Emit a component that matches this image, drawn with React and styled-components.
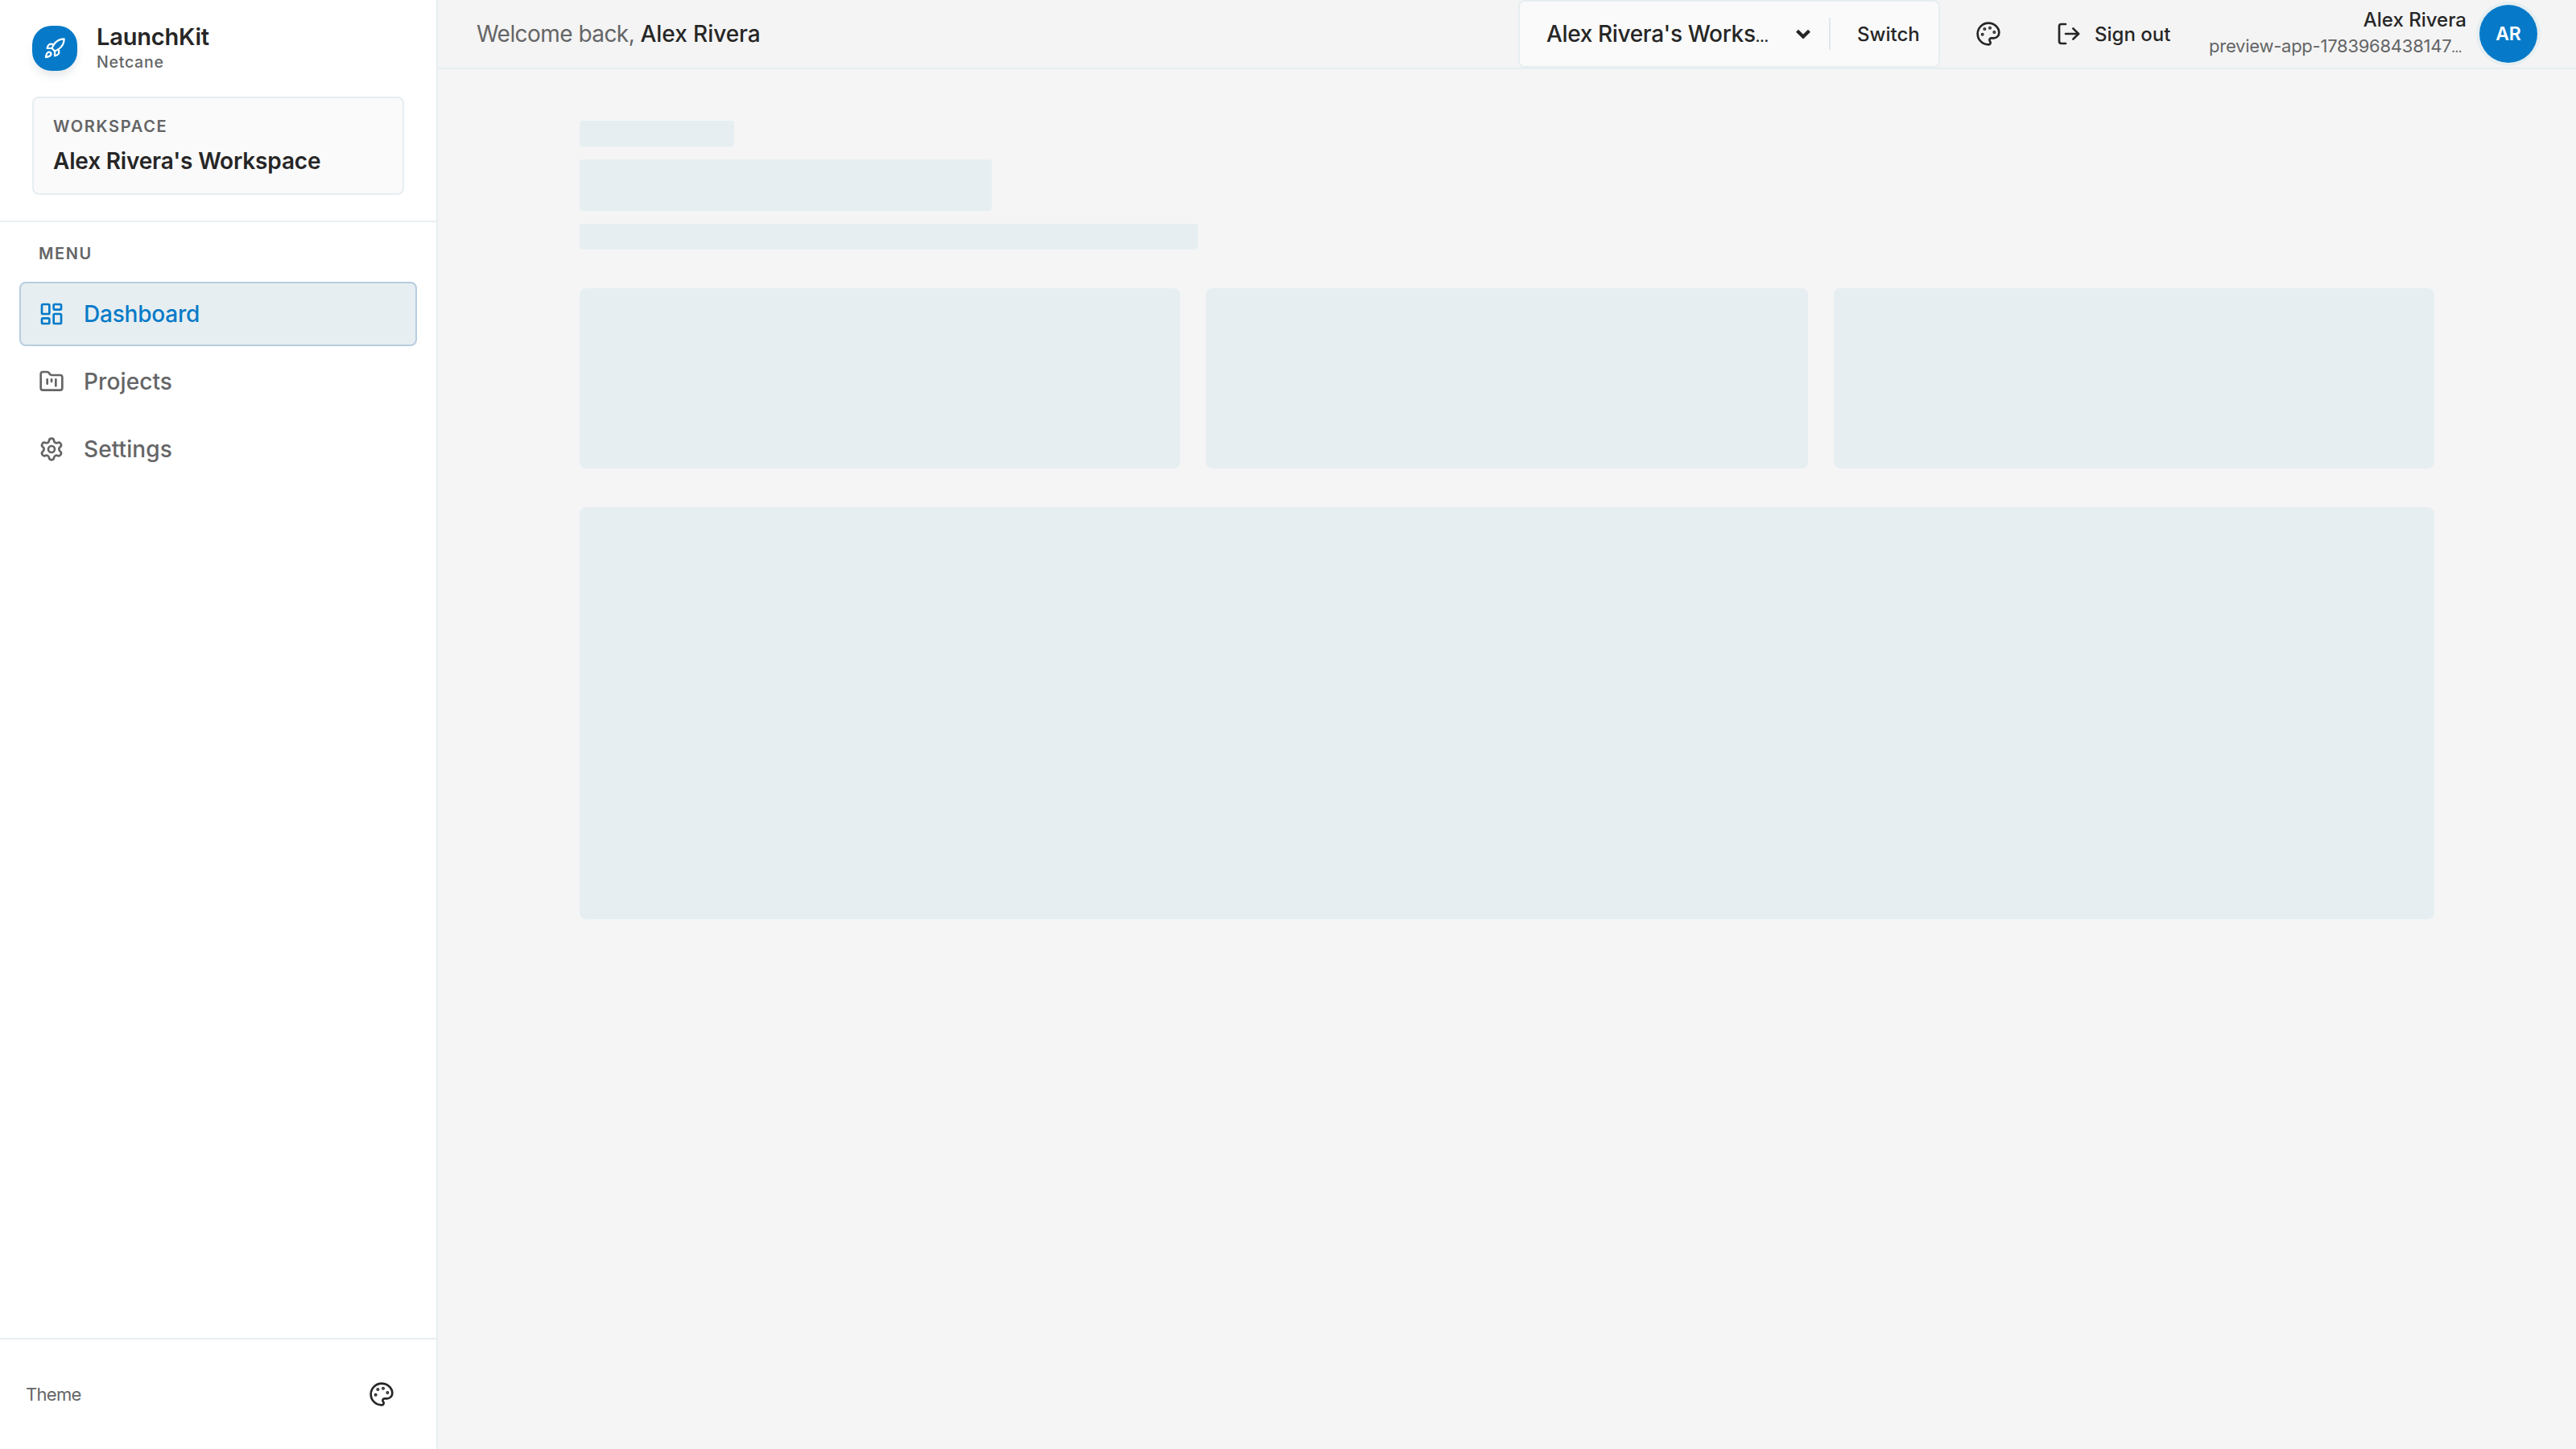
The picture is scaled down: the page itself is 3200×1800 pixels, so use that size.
import React from 'react'
import styled, { createGlobalStyle } from 'styled-components';
import { Rocket, LayoutDashboard, FolderKanban, Settings, Palette, LogOut } from 'lucide-react'

const menu = [
    { label: 'Dashboard', Icon: LayoutDashboard, active: true },
    { label: 'Projects', Icon: FolderKanban },
    { label: 'Settings', Icon: Settings },
]

function Sidebar() {
  return (
    <SidebarContainer>
        <SidebarHeader>
            <Brand>
                <Logo><Rocket size={28} strokeWidth={1.9}/></Logo>
                <BrandText>
                    <BrandName>LaunchKit</BrandName>
                    <BrandOrg>Netcane</BrandOrg>
                </BrandText>
            </Brand>
            <WorkspaceCard>
                <WorkspaceLabel>WORKSPACE</WorkspaceLabel>
                <WorkspaceName>Alex Rivera's Workspace</WorkspaceName>
            </WorkspaceCard>
        </SidebarHeader>
        <Nav>
            <NavLabel>MENU</NavLabel>
            {menu.map(({ label, Icon, active }) => (
                <NavItem key={label} $active={active}>
                    <Icon size={32} strokeWidth={2}/>
                    <span>{label}</span>
                </NavItem>
            ))}
        </Nav>
        <SidebarFooter>
            <ThemeLabel>Theme</ThemeLabel>
            <Palette size={32}/>
        </SidebarFooter>
    </SidebarContainer>
  )
}

function Topbar() {
  return (
    <Header>
        <Welcome>Welcome back, <strong>Alex Rivera</strong></Welcome>
        <Switcher>
            <Selected>Alex Rivera's Works<Dots>…</Dots></Selected>
            <Chevron viewBox="0 0 20 14">
                <path d="M2.5 3.2 L10 10.6 L17.5 3.2" fill="none" stroke="#262626" strokeWidth="4.2"/>
            </Chevron>
            <Divider/>
            <SwitchButton>Switch</SwitchButton>
        </Switcher>
        <ThemeButton><Palette size={32}/></ThemeButton>
        <SignOut>
            <LogOut size={32}/>
            <span>Sign out</span>
        </SignOut>
        <User>
            <UserName>Alex Rivera</UserName>
            <UserEmail>preview-app-1783968438147<Dots>…</Dots></UserEmail>
        </User>
        <Avatar>AR</Avatar>
    </Header>
  )
}

function App() {
  return (
    <Container>
        <GlobalStyle/>
        <Sidebar/>
        <Main>
            <Topbar/>
            <Content>
                <Titles>
                    <Line $width={192} $height={32}/>
                    <Line $width={512} $height={64}/>
                    <Line $width={768} $height={32}/>
                </Titles>
                <Cards>
                    <Block $height={224}/>
                    <Block $height={224}/>
                    <Block $height={224}/>
                </Cards>
                <Block $height={512}/>
            </Content>
        </Main>
    </Container>
  )
}

export default App;

const GlobalStyle = createGlobalStyle`
* {
    box-sizing: border-box;
}
body {
    margin: 0;
    font-family: Inter, "Liberation Sans", sans-serif;
    color: #262626;
    background: #f5f5f5;
}
svg {
    display: block;
    flex-shrink: 0;
}
`;

const Container = styled.div`
display: flex;
width: 3200px;
height: 1800px;
overflow: hidden;
`;

const SidebarContainer = styled.aside`
display: flex;
flex-direction: column;
flex-shrink: 0;
width: 544px;
background: #ffffff;
border-right: 2px solid #e6eef1;
`;

const SidebarHeader = styled.div`
display: flex;
flex-direction: column;
gap: 32px;
padding: 32px 40px;
border-bottom: 2px solid #e9eff2;
`;

const Brand = styled.div`
display: flex;
align-items: center;
gap: 24px;
height: 56px;
`;

const Logo = styled.div`
display: flex;
align-items: center;
justify-content: center;
width: 56px;
height: 56px;
border-radius: 24px;
background: #067ac8;
color: #ffffff;
box-shadow: 0 8px 12px -2px rgba(38, 60, 80, 0.12);
`;

const BrandText = styled.div`
display: flex;
flex-direction: column;
padding-top: 1px;
`;

const BrandName = styled.div`
font-size: 29px;
font-weight: 600;
line-height: 34px;
letter-spacing: -0.2px;
`;

const BrandOrg = styled.div`
font-size: 19.5px;
font-weight: 500;
line-height: 29px;
letter-spacing: 0.75px;
color: #646566;
`;

const WorkspaceCard = styled.div`
display: flex;
flex-direction: column;
gap: 16px;
height: 122px;
padding: 24px;
background: #fafafa;
border: 2px solid #e6eef1;
border-radius: 8px;
`;

const WorkspaceLabel = styled.div`
font-size: 20px;
font-weight: 600;
line-height: 22px;
letter-spacing: 1.68px;
color: #646566;
`;

const WorkspaceName = styled.div`
font-size: 28px;
font-weight: 600;
line-height: 32px;
letter-spacing: -0.18px;
`;

const Nav = styled.nav`
display: flex;
flex-direction: column;
flex: 1;
gap: 4px;
padding: 24px;
`;

const NavLabel = styled.div`
padding: 0 24px;
margin-bottom: 16px;
font-size: 20px;
font-weight: 600;
line-height: 30px;
letter-spacing: 1.6px;
color: #646566;
`;

const NavItem = styled.div`
display: flex;
align-items: center;
gap: 24px;
height: 80px;
padding: 0 22px;
border: 2px solid ${p => p.$active ? '#b8cddf' : 'transparent'};
border-radius: 8px;
background: ${p => p.$active ? '#e6eef1' : 'transparent'};
color: ${p => p.$active ? '#067ac8' : '#646566'};
font-size: 28px;
font-weight: ${p => p.$active ? 500 : 450};
letter-spacing: ${p => p.$active ? '-0.2px' : '0.1px'};
`;

const SidebarFooter = styled.div`
display: flex;
align-items: center;
justify-content: space-between;
height: 138px;
padding: 0 52px 0 32px;
border-top: 2px solid #e6eef1;
`;

const ThemeLabel = styled.div`
font-size: 22px;
letter-spacing: -0.7px;
color: #646566;
`;

const Main = styled.main`
display: flex;
flex-direction: column;
flex: 1;
min-width: 0;
`;

const Header = styled.header`
display: flex;
align-items: center;
height: 86px;
padding: 0 48px;
background: #f4f4f4;
border-bottom: 2px solid #e6eef1;
white-space: nowrap;
`;

const Welcome = styled.div`
flex: 1;
font-size: 28px;
letter-spacing: -0.55px;
color: #646566;
> strong {
    font-weight: 500;
    letter-spacing: -0.05px;
    color: #262626;
}
`;

const Switcher = styled.div`
display: flex;
align-items: center;
width: 524px;
height: 84px;
padding-left: 33px;
background: #fafafa;
border: 2px solid #e6eef1;
border-radius: 8px;
`;

const Selected = styled.div`
display: flex;
align-items: baseline;
width: 309px;
font-size: 28px;
font-weight: 500;
letter-spacing: -0.35px;
`;

const Dots = styled.span`
font-size: 0.58em;
font-weight: 700;
letter-spacing: 0;
`;

const Chevron = styled.svg`
width: 20px;
height: 14px;
`;

const Divider = styled.div`
width: 2px;
height: 40px;
margin: 0 33px 0 22px;
background: #dfe8ee;
`;

const SwitchButton = styled.div`
font-size: 24px;
font-weight: 500;
`;

const ThemeButton = styled.div`
margin: 0 68px 0 44px;
`;

const SignOut = styled.div`
display: flex;
align-items: center;
gap: 16px;
width: 190px;
font-size: 24px;
font-weight: 500;
`;

const User = styled.div`
display: flex;
flex-direction: column;
width: 320px;
margin-right: 16px;
padding-top: 1px;
`;

const UserName = styled.div`
font-size: 24px;
font-weight: 500;
line-height: 33px;
text-align: right;
`;

const UserEmail = styled.div`
font-size: 22px;
line-height: 33px;
letter-spacing: -0.25px;
color: #646566;
`;

const Avatar = styled.div`
display: flex;
align-items: center;
justify-content: center;
width: 72px;
height: 72px;
border-radius: 50%;
background: #067ac8;
box-shadow: 0 0 0 4px #e6eef1;
color: #ffffff;
font-size: 23px;
font-weight: 600;
`;

const Content = styled.div`
display: flex;
flex-direction: column;
gap: 48px;
width: 2304px;
margin: 64px auto 0;
`;

const Titles = styled.div`
display: flex;
flex-direction: column;
gap: 16px;
`;

const Line = styled.div`
width: ${p => p.$width}px;
height: ${p => p.$height}px;
border-radius: 4px;
background: #e6eef1;
`;

const Cards = styled.div`
display: grid;
grid-template-columns: 746px 748px 746px;
gap: 32px;
`;

const Block = styled.div`
height: ${p => p.$height}px;
border-radius: 8px;
background: #e6eef1;
`;
